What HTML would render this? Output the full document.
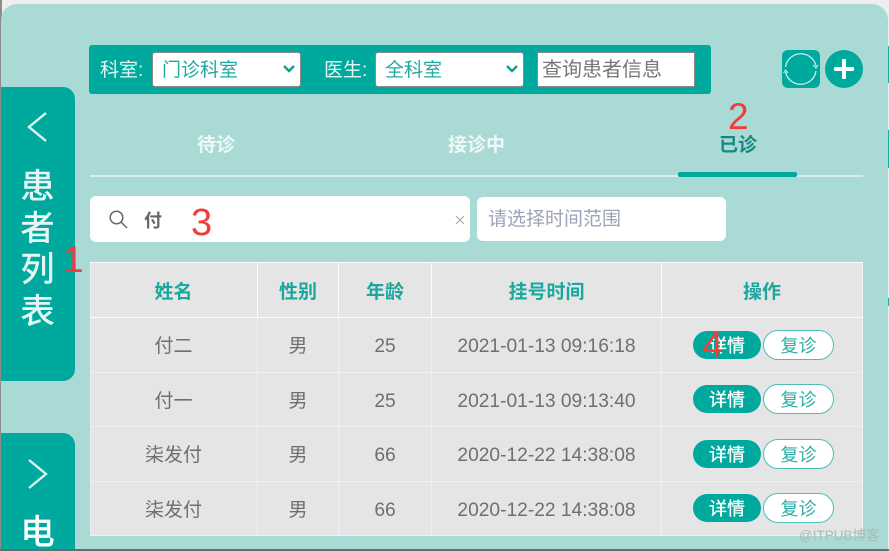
<!DOCTYPE html>
<html lang="zh-CN"><head><meta charset="utf-8">
<style>
html,body{margin:0;padding:0;width:889px;height:551px;overflow:hidden;background:#eee}
body{position:relative;font-family:"Liberation Sans","Noto Sans CJK SC",sans-serif}
div,span,svg{position:absolute;box-sizing:border-box}
.t{white-space:nowrap;line-height:1;text-align:center}
.sel{background:#fff;border:1px solid #8a8a8a;border-radius:3px;height:35px;top:52px;color:#1fa9a0;font-size:19px;line-height:36px;padding-left:9px;white-space:nowrap}
.hc{top:266px;height:54px;line-height:54px;text-align:center;color:#1aa79e;font-size:19px;font-weight:bold;white-space:nowrap}
.c{height:54px;line-height:57px;text-align:center;color:#6f6f6f;font-size:19px;white-space:nowrap}
.d{font-size:19.200px}
.b1{left:693px;width:68px;height:28px;border-radius:14px;background:#00a99d;color:#fff;font-size:18px;line-height:30px;text-align:center;-webkit-text-stroke:.3px #fff}
.b2{left:763px;width:71px;height:30px;border-radius:15px;background:#fff;border:1.5px solid #4fbcb5;color:#2caea5;font-size:18px;line-height:30px;text-align:center}
.red{color:#f23c3c;line-height:1;font-family:"Liberation Sans",sans-serif}
.l{background:#edf0f4}
.w{background:#fbfbfb}
</style></head><body>

<div style="left:0;top:0;width:2px;height:551px;background:#8c8c8c"></div>
<div style="left:1px;top:4px;width:887px;height:545px;background:#a9dad6;border-radius:16px 16px 0 0"></div>
<div style="left:0;top:549px;width:889px;height:2px;background:#5f6f6c"></div>
<div style="left:888px;top:46px;width:1px;height:37px;background:#19aba1"></div>
<div style="left:888px;top:130px;width:1px;height:38px;background:#19aba1"></div>
<div style="left:888px;top:298px;width:1px;height:8px;background:#19aba1"></div>

<!-- left tabs -->
<div style="left:1px;top:87px;width:74px;height:294px;background:#00a99d;border-radius:0 12px 12px 0"></div>
<svg style="left:25px;top:110px" width="24" height="34" viewBox="0 0 24 34"><path d="M21 3 L4 17 L21 31" fill="none" stroke="#dff3f1" stroke-width="2.400"/></svg>
<div class="t" style="left:20px;top:167px;width:35px;font-size:34px;color:#e6f6f4;line-height:41.700px;white-space:normal;-webkit-text-stroke:.6px #e6f6f4">患者列表</div>

<div style="left:1px;top:433px;width:74px;height:116px;background:#00a99d;border-radius:0 12px 0 0"></div>
<svg style="left:25px;top:457px" width="24" height="34" viewBox="0 0 24 34"><path d="M4 3 L21 17 L4 31" fill="none" stroke="#dff3f1" stroke-width="2.400"/></svg>
<div class="t" style="left:20px;top:516px;width:35px;font-size:34px;color:#fff;-webkit-text-stroke:.8px #fff">电</div>

<!-- filter bar -->
<div style="left:89px;top:45px;width:622px;height:49px;background:#00a99d;border-radius:3px"></div>
<div class="t" style="left:100px;top:61px;font-size:19px;color:#e6f6f4">科室:</div>
<div class="sel" style="left:152px;width:149px">门诊科室</div>
<svg style="left:282px;top:64px" width="14" height="10" viewBox="0 0 14 10"><path d="M2 2 L7 7 L12 2" fill="none" stroke="#0f9f96" stroke-width="2.400"/></svg>
<div class="t" style="left:324px;top:61px;font-size:19px;color:#e6f6f4">医生:</div>
<div class="sel" style="left:375px;width:149px">全科室</div>
<svg style="left:505px;top:64px" width="14" height="10" viewBox="0 0 14 10"><path d="M2 2 L7 7 L12 2" fill="none" stroke="#0f9f96" stroke-width="2.400"/></svg>
<div style="left:537px;top:52px;width:158px;height:35px;background:#fff;border:1px solid #8a8a8a;color:#777;font-size:20px;line-height:35px;padding-left:4px;white-space:nowrap">查询患者信息</div>

<!-- action icons -->
<div style="left:782px;top:50px;width:38px;height:38px;background:#00a99d;border-radius:6px"></div>
<svg style="left:782px;top:50px" width="38" height="38" viewBox="0 0 38 38"><path d="M3.500 17 A15.500 15.500 0 0 1 34 16 M34 21 A15.500 15.500 0 0 1 3.500 22" fill="none" stroke="#cdeeea" stroke-width="1.300"/><path d="M31 15 L34 18 L36 15 M6 23 L3.500 20 L1.500 23" fill="none" stroke="#cdeeea" stroke-width="1.100"/></svg>
<div style="left:825px;top:50px;width:38px;height:38px;background:#00a99d;border-radius:50%"></div>
<div style="left:834px;top:67px;width:20px;height:4px;background:#fff;border-radius:1px"></div>
<div style="left:842px;top:59px;width:4px;height:20px;background:#fff;border-radius:1px"></div>

<!-- tabs -->
<div class="t" style="left:197px;top:136px;width:38px;font-size:19px;font-weight:bold;color:#eef9f8">待诊</div>
<div class="t" style="left:448px;top:136px;width:57px;font-size:19px;font-weight:bold;color:#eef9f8">接诊中</div>
<div class="t" style="left:719px;top:136px;width:38px;font-size:19px;font-weight:bold;color:#15887f">已诊</div>
<div style="left:90px;top:175px;width:773px;height:2px;background:#d7eeec"></div>
<div style="left:678px;top:172px;width:119px;height:5px;background:#00a99d;border-radius:2px"></div>
<div class="red" style="left:728px;top:98px;font-size:37px">2</div>

<!-- search -->
<div style="left:90px;top:196px;width:380px;height:46px;background:#fff;border-radius:6px"></div>
<svg style="left:108px;top:209px" width="20" height="20" viewBox="0 0 20 20"><circle cx="8.500" cy="8.500" r="6.300" fill="none" stroke="#666" stroke-width="1.500"/><path d="M13 13 L19 19" stroke="#666" stroke-width="1.500"/></svg>
<div class="t" style="left:144px;top:212px;font-size:18px;font-weight:bold;color:#666">付</div>
<div class="red" style="left:191px;top:204px;font-size:38px">3</div>
<svg style="left:455px;top:215px" width="10" height="10" viewBox="0 0 10 10"><path d="M1 1 L9 9 M9 1 L1 9" stroke="#aaa" stroke-width="1.200"/></svg>
<div style="left:477px;top:197px;width:249px;height:44px;background:#fff;border-radius:6px"></div>
<div class="t" style="left:488px;top:210px;font-size:19px;color:#9ea3b8">请选择时间范围</div>

<!-- table -->
<div style="left:90px;top:263px;width:773px;height:273px;background:#e5e5e5"></div>
<div class="w" style="left:90px;top:262px;width:773px;height:1px"></div>
<div class="l" style="left:90px;top:263px;width:1px;height:273px"></div>
<div class="l" style="left:862px;top:263px;width:1px;height:273px"></div>
<div class="l" style="left:90px;top:535px;width:773px;height:1px"></div>
<div class="w" style="left:90px;top:317px;width:773px;height:1px"></div>
<div class="l" style="left:90px;top:372px;width:773px;height:1px"></div>
<div class="l" style="left:90px;top:426px;width:773px;height:1px"></div>
<div class="l" style="left:90px;top:481px;width:773px;height:1px"></div>
<div class="w" style="left:257px;top:263px;width:1px;height:55px"></div>
<div class="w" style="left:338px;top:263px;width:1px;height:55px"></div>
<div class="w" style="left:431px;top:263px;width:1px;height:55px"></div>
<div class="w" style="left:661px;top:263px;width:1px;height:55px"></div>
<div class="l" style="left:257px;top:318px;width:1px;height:218px"></div>
<div class="l" style="left:338px;top:318px;width:1px;height:218px"></div>
<div class="l" style="left:431px;top:318px;width:1px;height:218px"></div>
<div class="l" style="left:661px;top:318px;width:1px;height:218px"></div>

<div class="hc" style="left:90px;width:167px">姓名</div>
<div class="hc" style="left:258px;width:80px">性别</div>
<div class="hc" style="left:339px;width:92px">年龄</div>
<div class="hc" style="left:432px;width:229px">挂号时间</div>
<div class="hc" style="left:662px;width:200px">操作</div>

<div class="c" style="left:90px;top:318px;width:167px">付二</div>
<div class="c" style="left:258px;top:318px;width:80px">男</div>
<div class="c d" style="left:339px;top:318px;width:92px">25</div>
<div class="c d" style="left:432px;top:318px;width:229px">2021-01-13 09:16:18</div>

<div class="c" style="left:90px;top:373px;width:167px">付一</div>
<div class="c" style="left:258px;top:373px;width:80px">男</div>
<div class="c d" style="left:339px;top:373px;width:92px">25</div>
<div class="c d" style="left:432px;top:373px;width:229px">2021-01-13 09:13:40</div>

<div class="c" style="left:90px;top:427px;width:167px">柒发付</div>
<div class="c" style="left:258px;top:427px;width:80px">男</div>
<div class="c d" style="left:339px;top:427px;width:92px">66</div>
<div class="c d" style="left:432px;top:427px;width:229px">2020-12-22 14:38:08</div>

<div class="c" style="left:90px;top:482px;width:167px">柒发付</div>
<div class="c" style="left:258px;top:482px;width:80px">男</div>
<div class="c d" style="left:339px;top:482px;width:92px">66</div>
<div class="c d" style="left:432px;top:482px;width:229px">2020-12-22 14:38:08</div>

<div class="b1" style="top:331px">详情</div><div class="b2" style="top:330px">复诊</div>
<div class="b1" style="top:385px">详情</div><div class="b2" style="top:384px">复诊</div>
<div class="b1" style="top:440px">详情</div><div class="b2" style="top:439px">复诊</div>
<div class="b1" style="top:494px">详情</div><div class="b2" style="top:493px">复诊</div>

<div class="red" style="left:702px;top:327px;font-size:38px">4</div>
<div class="red" style="left:63px;top:241px;font-size:37px">1</div>

<div class="t" style="left:799px;top:529px;font-size:13.500px;color:#a9bcba">@ITPUB博客</div>
</body></html>
